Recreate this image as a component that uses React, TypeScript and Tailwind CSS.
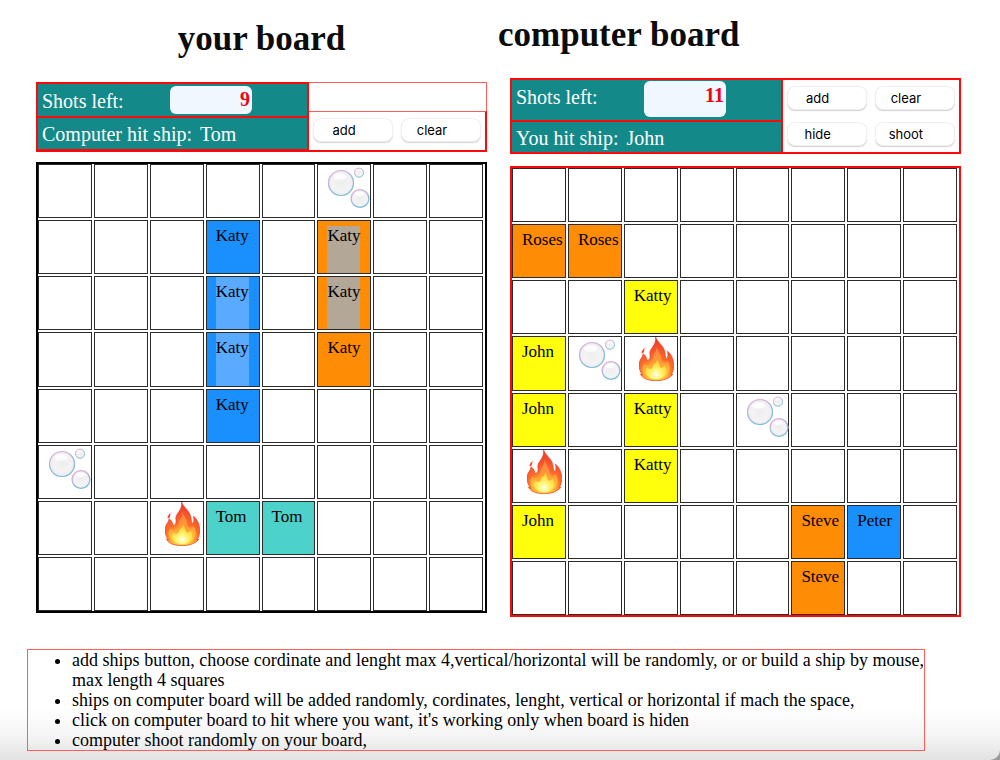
import { useId } from "react";

type Mark = {
  name?: string;
  color?: string;
  icon?: "bubbles" | "fire";
  highlight?: string;
  partial?: boolean;
};

type Marks = Record<string, Mark>;

const SIZE = 8;
const BLUE = "bg-[#1a90ff]";
const ORANGE = "bg-[#ff8c05]";
const YELLOW = "bg-[#ffff0c]";
const TEAL = "bg-[#4dd1cb]";

// Keys are "row-column".
const yourMarks: Marks = {
  "0-5": { icon: "bubbles" },
  "1-3": { name: "Katy", color: BLUE },
  "2-3": { name: "Katy", color: BLUE, highlight: "bg-[#5aaaff]" },
  "3-3": { name: "Katy", color: BLUE, highlight: "bg-[#5aaaff]" },
  "4-3": { name: "Katy", color: BLUE },
  "1-5": { name: "Katy", color: ORANGE, highlight: "bg-[#b3a898]", partial: true },
  "2-5": { name: "Katy", color: ORANGE, highlight: "bg-[#b3a898]" },
  "3-5": { name: "Katy", color: ORANGE },
  "5-0": { icon: "bubbles" },
  "6-2": { icon: "fire" },
  "6-3": { name: "Tom", color: TEAL },
  "6-4": { name: "Tom", color: TEAL },
};

const computerMarks: Marks = {
  "1-0": { name: "Roses", color: ORANGE },
  "1-1": { name: "Roses", color: ORANGE },
  "2-2": { name: "Katty", color: YELLOW },
  "3-0": { name: "John", color: YELLOW },
  "3-1": { icon: "bubbles" },
  "3-2": { icon: "fire" },
  "4-0": { name: "John", color: YELLOW },
  "4-2": { name: "Katty", color: YELLOW },
  "4-4": { icon: "bubbles" },
  "5-0": { icon: "fire" },
  "5-2": { name: "Katty", color: YELLOW },
  "6-0": { name: "John", color: YELLOW },
  "6-5": { name: "Steve", color: ORANGE },
  "6-6": { name: "Peter", color: BLUE },
  "7-5": { name: "Steve", color: ORANGE },
};

function Bubble({ cx, cy, r, id }: { cx: number; cy: number; r: number; id: string }) {
  return (
    <g>
      <circle cx={cx} cy={cy} r={r} fill={`url(#${id}-fill)`} />
      <circle cx={cx} cy={cy} r={r - 0.5} fill="none" stroke={`url(#${id}-rim)`} strokeWidth={r > 8 ? 1.2 : 0.9} />
      <ellipse cx={cx - r * 0.1} cy={cy - r * 0.5} rx={r * 0.5} ry={r * 0.25} fill="#fff" opacity="0.8" />
    </g>
  );
}

function Bubbles() {
  const id = useId().replace(/[^a-zA-Z0-9]/g, "");
  return (
    <svg viewBox="0 0 44 44" className="mt-[2px] size-11 shrink-0" role="img" aria-label="miss">
      <defs>
        <radialGradient id={`${id}-fill`}>
          <stop offset="0" stopColor="#ededee" />
          <stop offset="0.6" stopColor="#f4f3f4" />
          <stop offset="0.85" stopColor="#f1eef3" />
          <stop offset="1" stopColor="#cfdbe8" />
        </radialGradient>
        <linearGradient id={`${id}-rim`} x1="0.2" y1="0" x2="0.7" y2="1">
          <stop offset="0" stopColor="#eeb0d2" />
          <stop offset="0.3" stopColor="#c9b0d6" />
          <stop offset="0.6" stopColor="#8fb9dc" />
          <stop offset="1" stopColor="#7cc0dc" />
        </linearGradient>
      </defs>
      <Bubble cx={14} cy={16} r={13} id={id} />
      <Bubble cx={32} cy={5.7} r={5} id={id} />
      <Bubble cx={33} cy={31.5} r={9.4} id={id} />
    </svg>
  );
}

function Fire() {
  const id = useId().replace(/[^a-zA-Z0-9]/g, "");
  return (
    <svg viewBox="0 0 103 130" className="ml-[5px] h-11 w-[35px] shrink-0" role="img" aria-label="hit">
      <defs>
        <radialGradient id={`${id}-o`} gradientUnits="userSpaceOnUse" cx="50" cy="112" r="112" fx="50" fy="118">
          <stop offset="0" stopColor="#ffe94d" />
          <stop offset="0.28" stopColor="#ffb02e" />
          <stop offset="0.48" stopColor="#fb6a2a" />
          <stop offset="0.8" stopColor="#f24a2a" />
          <stop offset="1" stopColor="#ee3324" />
        </radialGradient>
        <linearGradient id={`${id}-m`} x1="0" y1="0" x2="0" y2="1">
          <stop offset="0" stopColor="#ff8048" />
          <stop offset="0.5" stopColor="#ff9a35" />
          <stop offset="1" stopColor="#ffd83c" />
        </linearGradient>
        <radialGradient id={`${id}-i`} cx="0.5" cy="0.78" r="0.6">
          <stop offset="0" stopColor="#fffff0" />
          <stop offset="0.4" stopColor="#fff67a" />
          <stop offset="1" stopColor="#ffd531" />
        </radialGradient>
      </defs>
      <path
        d="M49 0C52 14 72 24 76 44C78 54 77 58 80 64C85 62 87 54 84 42C94 50 103 66 102 84C102 98 99 106 94 111L100 110C94 118 84 123 74 126C60 130 40 130 26 126C16 123 8 118 4 110L10 112C4 104-1 92 0 80C1 66 10 62 12 50C20 54 22 64 24 70C31 68 34 62 32 50C30 34 52 26 49 0Z"
        fill={`url(#${id}-o)`}
        stroke="#ef3426"
        strokeWidth="2"
      />
      <path d="M17 30C14 38 17 41 13 46C9 51 6 48 8 42C9 38 14 36 17 30Z" fill="#f04a32" />
      <path
        d="M52 28C54 42 66 50 66 66C67 78 76 80 84 70C93 82 93 100 82 112C70 124 34 124 20 112C8 100 8 86 16 78C26 88 39 80 40 64C41 50 53 44 52 28Z"
        fill={`url(#${id}-m)`}
      />
      <path
        d="M54 64C55 74 61 78 61 87C64 94 72 90 76 84C84 97 80 112 70 119C60 126 40 126 30 119C18 110 18 97 25 90C29 97 40 95 41 87C42 78 54 76 54 64Z"
        fill={`url(#${id}-i)`}
      />
    </svg>
  );
}

function Cell({ mark, label }: { mark?: Mark; label: string }) {
  const inset = !mark?.highlight || mark.partial;
  return (
    <button
      type="button"
      aria-label={label}
      className={`flex min-h-0 min-w-0 border border-[#2b2b2b] pl-[9px] text-left text-[17px] leading-5 text-black ${mark?.color ?? "bg-white"} ${mark?.icon ? "items-start" : "items-stretch"} ${inset && !mark?.icon ? "pt-[5px]" : ""}`}
    >
      {mark?.icon === "bubbles" && <Bubbles />}
      {mark?.icon === "fire" && <Fire />}
      {mark?.name && (
        <span className={`${mark.highlight ?? ""} ${inset ? "" : "pt-[5px]"}`}>{mark.name}</span>
      )}
    </button>
  );
}

function Board({ marks, frame, title }: { marks: Marks; frame: string; title: string }) {
  const cells = Array.from({ length: SIZE * SIZE }, (_, i) => `${Math.floor(i / SIZE)}-${i % SIZE}`);
  return (
    <div
      role="group"
      aria-label={title}
      className={`grid aspect-square grid-cols-8 grid-rows-8 gap-[2px] border-2 pr-[2px] ${frame}`}
    >
      {cells.map((key) => (
        <Cell key={key} mark={marks[key]} label={`${title} ${key} ${marks[key]?.name ?? ""}`} />
      ))}
    </div>
  );
}

function ActionButton({ children }: { children: string }) {
  return (
    <button
      type="button"
      className="h-6 rounded-lg border border-[#f0f0f0] bg-white pr-[18px] font-[Inter,sans-serif] text-[13px] leading-4 text-black shadow-[0_1px_1px_rgba(0,0,0,0.18)]"
    >
      {children}
    </button>
  );
}

const statusRow = "flex bg-[#138a89] pl-1 text-xl leading-6 text-white";
const shotsInput =
  "w-[82px] rounded-md bg-[#f0f7ff] pr-[2px] text-right text-xl font-bold leading-6 text-[#f00414] outline-none";

export default function App() {
  return (
    <div className="bg-[#9a9a9a] font-['Liberation_Serif',serif] text-black">
      <main className="min-h-screen rounded-br-[10px] bg-white bg-[linear-gradient(to_top,#e2e2e2,#f4f4f4_24px,#ffffff_52px)]">
        <div className="grid grid-cols-2 items-start gap-[23px] pl-9 pr-[39px]">
          <section className="pt-[19px]">
            <h1 className="text-center text-[35px] font-bold leading-10 text-[#0c0c0c]">your board</h1>
            <div className="mt-[23px] grid grid-cols-[273fr_178fr]">
              <div className="grid grid-rows-2 gap-[2px] border-2 border-[#ff0808] bg-[#ff0808]">
                <div className={`${statusRow} h-8 items-center`}>
                  <label htmlFor="your-shots" className="w-[128px] pt-px">
                    Shots left:
                  </label>
                  <input id="your-shots" readOnly value="9" className={`${shotsInput} h-7 pb-px`} />
                </div>
                <div className={`${statusRow} h-[31px] items-center gap-2 pt-px`}>
                  <span>Computer hit ship:</span>
                  <span>Tom</span>
                </div>
              </div>
              <div className="flex flex-col">
                <div className="h-[29px] border border-b-0 border-l-0 border-[#ff5c5c]" />
                <div className="grid grow grid-cols-2 gap-2 border-2 border-l-0 border-t border-[#ff0808] border-t-[#ff5c5c] px-1 pt-[6px]">
                  <ActionButton>add</ActionButton>
                  <ActionButton>clear</ActionButton>
                </div>
              </div>
            </div>
            <div className="mt-[10px]">
              <Board marks={yourMarks} frame="border-black" title="your board" />
            </div>
          </section>

          <section className="pt-[15px]">
            <h1 className="-ml-3 text-[35px] font-bold leading-10 text-[#0c0c0c]">computer board</h1>
            <div className="mt-[23px] grid grid-cols-[273fr_178fr] border-2 border-[#ff0808]">
              <div className="flex flex-col gap-[2px] border-r-2 border-[#ff0808] bg-[#ff0808]">
                <div className={`${statusRow} h-10 items-start pt-px`}>
                  <label htmlFor="computer-shots" className="w-[128px] pt-[4px]">
                    Shots left:
                  </label>
                  <input id="computer-shots" readOnly value="11" className={`${shotsInput} h-9 pb-[8px]`} />
                </div>
                <div className={`${statusRow} h-[30px] items-center gap-2 pt-[2px]`}>
                  <span>You hit ship:</span>
                  <span>John</span>
                </div>
              </div>
              <div className="grid grid-cols-2 content-start gap-x-2 gap-y-3 px-1 pt-[6px]">
                <ActionButton>add</ActionButton>
                <ActionButton>clear</ActionButton>
                <ActionButton>hide</ActionButton>
                <ActionButton>shoot</ActionButton>
              </div>
            </div>
            <div className="mt-3">
              <Board marks={computerMarks} frame="border-[#ff0808]" title="computer board" />
            </div>
          </section>
        </div>

        <ul className="ml-[27px] mr-[75px] mt-8 list-disc border border-[#ff5c5c] pl-[44px] text-justify text-lg leading-5">
          <li>
            add ships button, choose cordinate and lenght max 4,vertical/horizontal will be randomly, or or build a ship
            by mouse, max length 4 squares
          </li>
          <li>ships on computer board will be added randomly, cordinates, lenght, vertical or horizontal if mach the space,</li>
          <li>click on computer board to hit where you want, it's working only when board is hiden</li>
          <li>computer shoot randomly on your board,</li>
        </ul>
      </main>
    </div>
  );
}
